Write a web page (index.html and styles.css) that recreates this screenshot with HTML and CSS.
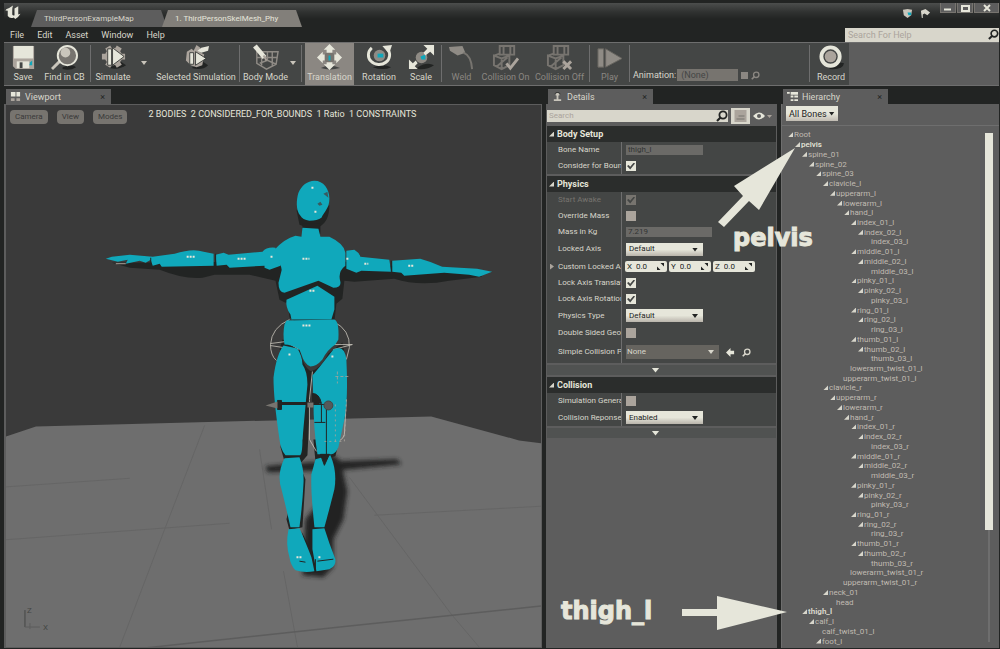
FILE: index.html
```html
<!DOCTYPE html>
<html lang="en">
<head>
<meta charset="utf-8">
<title>ThirdPersonSkelMesh_Phy</title>
<link rel="stylesheet" href="styles.css">
</head>
<body>
<svg class="defs" aria-hidden="true">
  <defs>
    <symbol id="mag" viewBox="0 0 12 12"><circle cx="7" cy="5" r="3.6" fill="none" stroke="currentColor" stroke-width="1.8"/><path d="M4.5 7.5 1 11" stroke="currentColor" stroke-width="2.2"/></symbol>
    <symbol id="gear" viewBox="0 0 28 28"><path d="M10 25Q20 27 27 22L21 18Z" fill="#222423"/><g stroke="#aba49c" stroke-width="6"><path d="M8 3 20 23M20 3 8 23M2 13H26"/></g><circle cx="14" cy="13" r="9" fill="#aba49c"/><path d="M8 5h4v17H8z" fill="#e6e6da" stroke="#222423" stroke-width=".8"/><path d="M13 4 25 13 13 22Z" fill="#e6e6da" stroke="#222423" stroke-width=".8"/></symbol>
    <symbol id="cage" viewBox="0 0 28 28"><path d="M8 2H23V11H8ZM12 2V12M19 2V11M2 12 10 15 18 12V22L10 26 2 22ZM10 15V26M2 12 8 10M4 24 16 14" fill="none" stroke="#77746f" stroke-width="2"/></symbol>
  </defs>
</svg>

<header class="titlebar">
  <svg class="logo" viewBox="0 0 24 24"><path d="M3 7Q8 5 12 2Q11 5 11 8V14Q12 16 14 15V6L19 3V14L22 13Q19 18 15 20L13 18Q8 20 5 16V9Q4 8 2 9Z" fill="#e6e6da"/></svg>
  <nav class="doctabs">
    <button class="doctab">ThirdPersonExampleMap</button>
    <button class="doctab current">1. ThirdPersonSkelMesh_Phy</button>
  </nav>
  <div class="notices">
    <svg viewBox="0 0 12 12"><path d="M1 2 6 1 11 2 10 8 6 11 2 8Z" fill="#c9c5bb"/><path d="M6 5H10V8H7Z" fill="#10a8bb"/></svg>
    <svg viewBox="0 0 12 12"><path d="M1 3 6 1 11 5 8 8 5 6 3 7V11H2Z" fill="#d8d6cb"/></svg>
  </div>
  <div class="winbtns">
    <button aria-label="Minimize"><svg viewBox="0 0 14 8"><path d="M3 5.500H10" stroke="#e6e6da" stroke-width="2"/></svg></button>
    <button aria-label="Restore"><svg viewBox="0 0 14 8"><path d="M4 2H11V7H4Z" fill="none" stroke="#e6e6da" stroke-width="2"/></svg></button>
    <button class="close" aria-label="Close"><svg viewBox="0 0 14 8"><path d="M4 1 10 7M10 1 4 7" stroke="#e6e6da" stroke-width="2"/></svg></button>
  </div>
</header>

<div class="menubar">
  <button>File</button><button>Edit</button><button>Asset</button><button>Window</button><button>Help</button>
  <label class="help"><input type="text" aria-label="Search For Help" placeholder="Search For Help"><svg><use href="#mag"/></svg></label>
</div>

<div class="toolbar">
  <div class="tools">
    <button class="tool w38"><svg viewBox="0 0 28 28"><path d="M3 2H25V26H6L3 23Z" fill="#aba49c"/><path d="M4 2H24V15H4Z" fill="#e6e6da"/><path d="M7 18H20V25H7Z" fill="#e6e6da"/><path d="M10 19H13V25H10Z" fill="#444645"/><path d="M21 19 23 17V22H20Z" fill="#10a8bb"/></svg>Save</button>
    <button class="tool w45"><svg viewBox="0 0 28 28"><path d="M9 18 1 26" stroke="#c9c5bb" stroke-width="3"/><path d="M12 24Q22 20 26 24Q20 28 12 26Z" fill="#222423"/><circle cx="17" cy="12" r="10" fill="#77746f" stroke="#e6e6da" stroke-width="2"/><circle cx="15" cy="9" r="5" fill="#c9c5bb"/></svg>Find in CB</button>
    <i class="sep"></i>
    <button class="tool w38"><svg viewBox="0 0 28 28"><use href="#gear"/></svg>Simulate</button>
    <button class="more w24" aria-label="Simulate options"></button>
    <button class="tool w80"><svg viewBox="0 0 28 28"><path d="M9 25Q20 28 26 22L20 18Z" fill="#222423"/><path d="M4 8 9 5 11 7 14 1 18 4 17 8 22 11 20 22 14 24 8 22 3 17Z" fill="#aba49c"/><path d="M15 7 19 4 27 2 26 7 19 9Z" fill="#e6e6da"/><path d="M7 9H11V21H7ZM13 8 24 15 13 22Z" fill="#e6e6da" stroke="#222423" stroke-width=".8"/></svg>Selected Simulation</button>
    <i class="sep"></i>
    <button class="tool w45"><svg viewBox="0 0 28 28"><path d="M5 8H27L25 21 15 26 5 20ZM8 20 16 17 25 21M16 17V8M10 9V22M21 8V23M5 14H26" fill="none" stroke="#8f8b85" stroke-width="1.500"/><path d="M3 2 13 14" stroke="#e6e6da" stroke-width="5"/><path d="M12 12 15 17" stroke="#aba49c" stroke-width="2"/></svg>Body Mode</button>
    <button class="more w10" aria-label="Body Mode options"></button>
    <i class="sep"></i>
    <button class="tool w49 active"><svg viewBox="0 0 28 28"><path d="M5 25Q14 20 25 25Q14 28 5 25Z" fill="#444645"/><circle cx="14" cy="14" r="6" fill="#77746f"/><path d="M13 12H15V17H13Z" fill="#10a8bb"/><path d="M14 0 20 6H17V9H11V6H8ZM14 27 8 21H11V19H17V21H20ZM1 14 7 8V11H9V17H7V20ZM27 14 21 8V11H19V17H21V20Z" fill="#e6e6da"/></svg>Translation</button>
    <button class="tool w50"><svg viewBox="0 0 28 28"><path d="M7 24Q18 20 26 24Q18 28 7 24Z" fill="#222423"/><circle cx="14" cy="12" r="6" fill="#8f8b85"/><path d="M12 10H18V14H12Z" fill="#10a8bb"/><path d="M6 4A11 10 0 1 0 22 5" fill="none" stroke="#e6e6da" stroke-width="3"/><path d="M17 2 27 1 24 10Z" fill="#e6e6da"/></svg>Rotation</button>
    <button class="tool w34"><svg viewBox="0 0 28 28"><path d="M10 24Q20 18 27 22Q20 27 10 26Z" fill="#222423"/><circle cx="14" cy="14" r="6" fill="#8f8b85"/><path d="M13 13 18 11V16H14Z" fill="#10a8bb"/><path d="M16 1H27V12L23 8 18 12 16 9 20 5ZM1 16 5 20 8 17 10 20 7 23 10 26H1Z" fill="#e6e6da"/></svg>Scale</button>
    <i class="sep"></i>
    <button class="tool w33" disabled><svg viewBox="0 0 28 28"><path d="M1 3 15 2 18 9 10 12 2 7Z" fill="#8f8b85"/><path d="M16 9Q24 12 25 26" fill="none" stroke="#77746f" stroke-width="2"/></svg>Weld</button>
    <button class="tool w55" disabled><svg viewBox="0 0 28 28"><use href="#cage"/><path d="M15 20 19 25 27 15" fill="none" stroke="#aba49c" stroke-width="3"/></svg>Collision On</button>
    <button class="tool w53" disabled><svg viewBox="0 0 28 28"><use href="#cage"/><path d="M18 18 26 26M26 18 18 26" stroke="#aba49c" stroke-width="3"/></svg>Collision Off</button>
    <i class="sep"></i>
    <button class="tool w33" disabled><svg viewBox="0 0 28 28"><path d="M2 5H8V24H2ZM10 5 27 15 10 24Z" fill="#8f8b85" stroke="#66645f"/></svg>Play</button>
    <i class="sep"></i>
    <div class="anim w173"><label for="anim">Animation:</label><select id="anim" disabled><option>(None)</option></select><i class="chip"></i><svg><use href="#mag"/></svg></div>
    <i class="sep"></i>
    <button class="tool w36"><svg viewBox="0 0 28 28"><path d="M12 22Q24 18 27 20Q26 27 12 26Z" fill="#222423"/><circle cx="13" cy="13" r="9.500" fill="#444645" stroke="#e6e6da" stroke-width="4"/><circle cx="13" cy="13" r="6" fill="#aba49c"/></svg>Record</button>
  </div>
</div>

<main class="panels">
  <section class="panel">
    <div class="tab"><svg viewBox="0 0 12 12"><path d="M1 1H6V6H1ZM7 1H11V6H7Z" fill="#e6e6da"/><path d="M1 8H5V11H1ZM7 8H11V11H7Z" fill="#aba49c"/></svg>Viewport<span class="x">×</span></div>
    <div class="viewport">
      <svg class="scene" viewBox="6 105 536 543" preserveAspectRatio="xMidYMid slice">
        <defs>
          <filter id="soft" x="-20%" y="-20%" width="140%" height="140%"><feGaussianBlur stdDeviation="2"/></filter>
        </defs>
        <path d="M0 439 36 427 432 417 520 441 560 446V660H0Z" fill="#6e6e6e"/>
        <g fill="none" stroke="#656565">
          <path d="M205 426 165 530 120 648M350 478 452 615 480 648M284 572 298 648M260 450 272 530M0 488 130 479M0 541 230 524M375 516 542 507"/>
          <path d="M145 649 350 627 542 607" stroke="#5d5d5d" stroke-width="1.500"/>
        </g>
        <g fill="#222423" filter="url(#soft)">
          <path d="M266 467 310 463 398 460 402 465 340 471 268 473Z"/>
          <path d="M328 452 342 462 344 474 348 492 344 520 334 540 334 568 324 578 303 576 306 520 322 500Z"/>
        </g>
        <g fill="#222423">
          <path d="M297 210 300 225Q308 229 320 227Q330 222 330 205L322 216Z"/>
          <path d="M303 224H321V234H303Z"/>
          <path d="M112 263 130 268 160 270Q185 280 203 278L215 275 250 275 276 281 280 300 286 303 288 302 290 318 297 323 335 322 337 304 343 299 345 281 355 282 395 279Q420 287 450 281L483 277 478 273 345 262 270 262Z"/>
          <path d="M283 340 300 347Q303 368 312 372Q322 368 329 354L343 343 345 352 320 378 308 380 280 350Z"/>
          <path d="M304 372H312L308 456 302 463 285 462 281 448 282 440H303Z"/>
          <path d="M314 440H340L336 457 316 462ZM300 465 306 480 303 528 290 531 287 520ZM333 465 337 485 325 530 315 528ZM302 532 316 560V572H313Z"/>
        </g>
        <g fill="none" stroke="#c9c5bb" stroke-width=".8">
          <path d="M290 320Q272 328 271 345Q271 356 277 361M334 322Q351 330 350 348L347 360M271 344 286 342 300 350M271 346 284 348M334 345H353L334 350M313 372 310 400V440L317 452M347 400 345 435Q343 444 330 442"/>
        </g>
        <g fill="#10a8bb">
          <path d="M315 181C324 181 330 189 330 199C330 208 325 212 322 218Q318 221 310 221Q303 220 301 216C296 211 297 199 299 193C302 186 308 181 315 181Z"/>
          <path d="M302 237 303 228 319 229 321 237 330 237Q345 244 346 253V266Q338 272 341 282Q342 288 334 288L319 281 285 293Q279 293 279 283L282 271Q283 266 276 260L275 250Q285 239 296 236Z"/>
          <path d="M263 252Q267 247 276 248L281 266 270 270 265 268V266L230 268 227 265 217 266 216 255 224 253 229 255Z"/>
          <path d="M153 257 175 254Q193 248 204 252L214 254V266L162 267 160 264 153 266 151 260 146 263 140 261 126 264 128 260 118 262 106 259 112 257 130 255Z"/>
          <path d="M347 251 355 250Q360 253 361 257L390 260 392 272 362 271 357 273 347 269Z"/>
          <path d="M393 261 421 259Q432 262 443 267L478 269 493 272 480 277 470 275 445 273 405 276 402 273 393 272Z"/>
          <path d="M287 300 318 286 335 297V310L332 320H292L291 315Q286 308 287 300Z"/>
          <path d="M287 321 335 320Q340 322 339 340L336 345Q328 350 323 360Q317 367 311 367Q305 365 302 355L300 350Q292 345 285 345Q283 335 285 325Z"/>
          <path d="M284 346 298 349Q303 357 303 365Q308 372 308 385L303 440Q303 456 300 456L286 456Q281 450 280 440Q274 400 274 378Q277 355 284 346Z"/>
          <path d="M334 350Q345 344 347 360Q349 400 345 420L339 448Q336 455 332 455H318Q314 430 314 400L313 376Q320 368 326 360Z"/>
          <path d="M285 459 300 458Q305 470 304 485Q303 505 300 528H291Q287 510 282 490Q277 475 285 459Z"/>
          <path d="M316 460 331 456Q338 472 335 490Q330 510 325 528H315Q311 490 312 475Z"/>
          <path d="M289 530 300 529Q307 545 312 558L315 572Q305 574 296 571Q291 566 290 558Q286 545 289 530Z"/>
          <path d="M313 530 325 529Q330 545 336 560Q337 567 330 570L317 572 313 550Z"/>
        </g>
        <g stroke="#222423" fill="#222423">
          <path d="M278 405H330M327 405V460M322 405V423M315 423H326M300 562 306 563M318 562 334 560M316 560V572M216 254V266M151 258V265M392 261V272" fill="none"/>
          <path d="M282 404H320" fill="none" stroke-width="3"/>
          <path d="M278 401H282V410H278ZM313 394Q320 394 322 404L313 402ZM321 455H330L325 466Z"/>
          <circle cx="329" cy="406" r="4.500" fill="#55595a" stroke="#444645"/>
          <path d="M266 406 278 402V409ZM308 403H314V408H308Z" fill="#77746f" stroke="none"/>
          <path d="M318 204 321 202 323 205 320 206ZM324 194 328 192 329 198Z" fill="#3a5a5f" stroke="none"/>
        </g>
        <path d="M116 264H126" stroke="#aba49c"/>
        <g fill="none" stroke="#aba49c" stroke-width=".8">
          <path d="M336 377H350M338 372V384" stroke-dasharray="3 2"/>
          <path d="M336 405V442M325 442H345L347 400" stroke-dasharray="2 3"/>
        </g>
        <g stroke="#e6e6da" stroke-width="2" stroke-dasharray="2 1">
          <path d="M303 259H310M187 257H195M238 259H246M271 257H274M347 259H349M365 264H369M409 266H414M312 188H315M315 212H317M310 291H315M303 326H311M289 355H292M332 357H335M297 558H302M319 558H321"/>
        </g>
        <g fill="none" stroke="#444645"><path d="M25 611V628"/><path d="M25 628H40M30 624V630" stroke="#5d5d5d"/></g>
        <g fill="#444645" class="axis"><text x="27" y="614">Z</text><text x="43" y="631">X</text></g>
      </svg>
      <div class="vbar">
        <button>Camera</button><button>View</button><button>Modes</button>
        <span class="stats">2 BODIES&nbsp; 2 CONSIDERED_FOR_BOUNDS&nbsp; 1 Ratio&nbsp; 1 CONSTRAINTS</span>
      </div>
    </div>
  </section>

  <section class="panel">
    <div class="tab"><svg viewBox="0 0 12 12"><path d="M4 2H8V5H7V9H10V11H2V9H5V5H4Z" fill="#c9c5bb"/><path d="M3 3A4 4 0 0 1 9 3" fill="none" stroke="#222423"/></svg>Details<span class="x">×</span></div>
    <div class="body details">
      <div class="searchrow">
        <label class="find"><input type="text" aria-label="Search details" placeholder="Search"><svg><use href="#mag"/></svg></label>
        <button class="grid" aria-label="Property matrix"><svg viewBox="0 0 12 12"><path d="M0 0H12V12H0Z" fill="#aba49c"/><path d="M2 9H10M4 6H10" stroke="#77746f"/></svg></button>
        <button class="eye" aria-label="View options"><svg viewBox="0 0 20 10"><path d="M0 5Q6-2 12 5Q6 12 0 5Z" fill="#e6e6da"/><circle cx="6" cy="5" r="2" fill="#5d5d5d"/><path d="M14 4H19L16.500 7Z" fill="#aba49c"/></svg></button>
      </div>

      <h2>Body Setup</h2>
      <div class="row"><label for="bone">Bone Name</label><div><input class="dim" id="bone" type="text" value="thigh_l" readonly></div></div>
      <div class="row"><label for="cons">Consider for Bounds</label><div><input id="cons" type="checkbox" checked></div></div>

      <h2 class="next">Physics</h2>
      <div class="row off"><label for="awake">Start Awake</label><div><input id="awake" type="checkbox" checked disabled></div></div>
      <div class="row"><label for="over">Override Mass</label><div><input id="over" type="checkbox"></div></div>
      <div class="row"><label for="mass">Mass in Kg</label><div><input class="dim wide" id="mass" type="text" value="7.219" readonly></div></div>
      <div class="row h18"><label for="axis">Locked Axis</label><div><span class="combo"><select id="axis"><option>Default</option></select></span></div></div>
      <div class="row h17"><label for="cx" class="closed">Custom Locked Axis</label><div class="vec">
        <label>X<input id="cx" type="text" value="0.0"><svg viewBox="0 0 8 8"><path d="M4 0H8V4ZM0 4V8H4Z" fill="#222423"/></svg></label>
        <label>Y<input type="text" value="0.0"><svg viewBox="0 0 8 8"><path d="M4 0H8V4ZM0 4V8H4Z" fill="#222423"/></svg></label>
        <label>Z<input type="text" value="0.0"><svg viewBox="0 0 8 8"><path d="M4 0H8V4ZM0 4V8H4Z" fill="#222423"/></svg></label></div></div>
      <div class="row"><label for="lt">Lock Axis Translation</label><div><input id="lt" type="checkbox" checked></div></div>
      <div class="row"><label for="lr">Lock Axis Rotation</label><div><input id="lr" type="checkbox" checked></div></div>
      <div class="row h17"><label for="pt">Physics Type</label><div><span class="combo"><select id="pt"><option>Default</option></select></span></div></div>
      <div class="row h17"><label for="ds">Double Sided Geometry</label><div><input id="ds" type="checkbox"></div></div>
      <div class="row h22"><label for="sc">Simple Collision Physical Material</label><div><span class="combo dark"><select id="sc"><option>None</option></select></span>
        <button class="mini" aria-label="Use selected"><svg viewBox="0 0 10 10"><path d="M0 5 5 0V3H9V7H5V10Z" fill="#e6e6da"/></svg></button>
        <button class="mini" aria-label="Browse"><svg><use href="#mag"/></svg></button></div></div>
      <button class="expand" aria-label="Show advanced physics"></button>

      <h2>Collision</h2>
      <div class="row"><label for="sg">Simulation Generates Hit Events</label><div><input id="sg" type="checkbox"></div></div>
      <div class="row h17"><label for="cr">Collision Reponse</label><div><span class="combo"><select id="cr"><option>Enabled</option></select></span></div></div>
      <button class="expand" aria-label="Show advanced collision"></button>
    </div>
  </section>

  <section class="panel">
    <div class="tab"><svg viewBox="0 0 12 12"><path d="M0 1H3V3H0ZM4 1H12V4H4ZM4 5H7V7H4ZM8 5H12V7H8ZM4 9H7V11H4ZM8 9H12V11H8Z" fill="#e6e6da"/></svg>Hierarchy<span class="x">×</span></div>
    <div class="body hier">
      <div class="filter"><button class="bones">All Bones</button></div>
      <div class="treebox">
        <ul class="tree">
          <li class="d0 open">Root</li><li class="d1 open hot">pelvis</li><li class="d2 open">spine_01</li><li class="d3 open">spine_02</li><li class="d4 open">spine_03</li>
          <li class="d5 open">clavicle_l</li><li class="d6 open">upperarm_l</li><li class="d7 open">lowerarm_l</li><li class="d8 open">hand_l</li>
          <li class="d9 open">index_01_l</li><li class="d10 open">index_02_l</li><li class="d11">index_03_l</li>
          <li class="d9 open">middle_01_l</li><li class="d10 open">middle_02_l</li><li class="d11">middle_03_l</li>
          <li class="d9 open">pinky_01_l</li><li class="d10 open">pinky_02_l</li><li class="d11">pinky_03_l</li>
          <li class="d9 open">ring_01_l</li><li class="d10 open">ring_02_l</li><li class="d11">ring_03_l</li>
          <li class="d9 open">thumb_01_l</li><li class="d10 open">thumb_02_l</li><li class="d11">thumb_03_l</li>
          <li class="d8">lowerarm_twist_01_l</li><li class="d7">upperarm_twist_01_l</li>
          <li class="d5 open">clavicle_r</li><li class="d6 open">upperarm_r</li><li class="d7 open">lowerarm_r</li><li class="d8 open">hand_r</li>
          <li class="d9 open">index_01_r</li><li class="d10 open">index_02_r</li><li class="d11">index_03_r</li>
          <li class="d9 open">middle_01_r</li><li class="d10 open">middle_02_r</li><li class="d11">middle_03_r</li>
          <li class="d9 open">pinky_01_r</li><li class="d10 open">pinky_02_r</li><li class="d11">pinky_03_r</li>
          <li class="d9 open">ring_01_r</li><li class="d10 open">ring_02_r</li><li class="d11">ring_03_r</li>
          <li class="d9 open">thumb_01_r</li><li class="d10 open">thumb_02_r</li><li class="d11">thumb_03_r</li>
          <li class="d8">lowerarm_twist_01_r</li><li class="d7">upperarm_twist_01_r</li>
          <li class="d5 open">neck_01</li><li class="d6">head</li>
          <li class="d2 open bold">thigh_l</li><li class="d3 open">calf_l</li><li class="d4">calf_twist_01_l</li><li class="d4 open">foot_l</li>
        </ul>
        <div class="scroll"><i></i></div>
      </div>
    </div>
  </section>
</main>

<svg class="arrow up" viewBox="0 0 78 80"><path d="M77 0 41 62 31 53 6 79 0 74 25 48 16 38Z"/></svg>
<svg class="arrow right" viewBox="0 0 106 36"><path d="M105 17 35 35V21H0V14H35V1Z"/></svg>
<span class="note n1">pelvis</span>
<span class="note n2">thigh_l</span>
</body>
</html>
```
FILE: styles.css
```css
* { box-sizing: border-box; }
html, body { height: 100%; }
body {
  margin: 0;
  padding: 3px 1px 1px 4px;
  display: flex;
  flex-direction: column;
  position: relative;
  overflow: hidden;
  background: #222423;
  color: #d8d6cb;
  font: 9px/12px Roboto, "Liberation Sans", sans-serif;
}
button, input, select {
  font: inherit;
  color: inherit;
  background: none;
  border: 0;
  padding: 0;
  margin: 0;
  border-radius: 0;
  appearance: none;
}
svg { display: block; flex: none; }
.defs { position: absolute; width: 0; height: 0; }

.titlebar { display: flex; height: 24px; background: linear-gradient(#4c4e4d, #303231 9px, #222423 16px); }
.logo { width: 18px; height: 20px; }
.doctabs { display: flex; align-items: flex-end; flex: 1; padding-left: 9px; font-size: 8px; }
.doctab {
  width: 136px;
  height: 17px;
  padding-left: 13px;
  text-align: left;
  background: #5d5d5d;
  clip-path: polygon(6px 0, calc(100% - 6px) 0, 100% 100%, 0 100%);
}
.doctab.current { width: 140px; margin-left: -5px; background: #827f7a; color: #e6e6da; }
.notices { display: flex; gap: 7px; padding: 5px 9px 0 0; }
.notices svg { width: 11px; height: 11px; }
.winbtns { display: flex; gap: 1px; align-items: flex-start; }
.winbtns button { width: 16px; height: 10px; background: #5d5d5d; border: 1px solid #77746f; border-top: 0; }
.winbtns .close { width: 25px; }
.winbtns svg { width: 14px; height: 8px; margin: auto; }

.menubar { display: flex; height: 15px; align-items: center; gap: 13px; padding-left: 6px; }
.help { display: flex; align-items: center; width: 154px; height: 14px; margin-left: auto; background: #d8d6cb; }
.help input { flex: 1; min-width: 0; padding-left: 3px; }
.help svg { width: 11px; height: 11px; color: #222423; }
::placeholder { color: #aba49c; opacity: 1; }

.toolbar { height: 44px; background: #5d5d5d; border: 1px solid #6e6e6e; border-width: 1px 0 1px 0; }
.tools { display: inline-flex; height: 42px; background: #444645; }
.tool { display: flex; flex-direction: column; align-items: center; padding-top: 1px; height: 42px; white-space: nowrap; flex: none; }
.tool svg { width: 27px; height: 27px; }
.tool:disabled { color: #8b8782; }
.tool.active { background: #8b8782; color: #d8d6cb; }
.sep { flex: none; width: 1px; height: 37px; margin: 2px 3px; background: #6e6e6e; }
.more { display: grid; place-items: center; height: 40px; }
.more::before { content: ""; width: 6px; height: 4px; background: #c9c5bb; clip-path: polygon(0 0, 100% 0, 50% 100%); }
.w10 { width: 10px; } .w24 { width: 24px; } .w33 { width: 33px; } .w34 { width: 34px; } .w36 { width: 36px; }
.w38 { width: 38px; } .w45 { width: 45px; } .w49 { width: 49px; } .w50 { width: 50px; } .w53 { width: 53px; }
.w55 { width: 55px; } .w80 { width: 80px; } .w173 { width: 173px; }
.anim { display: flex; align-items: center; gap: 3px; height: 12px; margin-top: 26px; }
.anim select { width: 61px; height: 12px; padding-left: 4px; background: #77746f; color: #444645; opacity: 1; }
.anim label { margin-right: -2px; }
.anim .chip { width: 7px; height: 7px; background: #8b8782; }
.anim svg { width: 9px; height: 9px; color: #8b8782; }

.panels {
  flex: 1;
  min-height: 0;
  display: grid;
  grid-template-columns: minmax(0, 1fr) 231px 218px;
  gap: 4px;
  padding-top: 3px;
}
.panel { display: flex; flex-direction: column; min-width: 0; min-height: 0; }
.tab { display: flex; align-items: center; gap: 4px; width: 105px; height: 15px; margin-left: 2px; padding: 0 6px 0 4px; background: #5d5d5d; flex: none; }
.tab svg { width: 11px; height: 11px; }
.tab .x { margin-left: auto; color: #222423; }
.body { flex: 1; min-height: 0; background: #5d5d5d; font-size: 8px; }

.viewport { flex: 1; min-height: 0; position: relative; border: 1px solid #5d5d5d; border-left-width: 2px; background: #3a3a3a; }
.scene { position: absolute; inset: 0; width: 100%; height: 100%; }
.axis { font: 8px Roboto, sans-serif; }
.vbar { position: relative; display: flex; align-items: center; gap: 9px; padding: 3px 4px; }
.vbar button { height: 14px; padding: 0 5px; border-radius: 4px; background: #77746f; color: #3a3a3a; font-size: 8px; }
.vbar .stats { margin: 0 0 5px 12px; color: #e6e6da; }

.details { padding: 0 1px; }
.searchrow { display: flex; align-items: center; gap: 3px; height: 22px; padding-top: 2px; }
.find { display: flex; align-items: center; width: 181px; height: 12px; background: #d8d6cb; }
.find input { flex: 1; min-width: 0; padding-left: 2px; }
.find svg { width: 12px; height: 12px; color: #222423; }
.grid { width: 19px; height: 16px; background: #d8d6cb; display: grid; place-items: center; }
.grid svg { width: 13px; height: 12px; }
.eye svg { width: 20px; height: 10px; }
.details h2 {
  display: flex;
  align-items: center;
  gap: 3px;
  margin: 0;
  height: 16px;
  padding-left: 2px;
  background: #2b2d2c;
  font-size: 9px;
  font-weight: 700;
  color: #e6e6da;
}
.details h2.next { margin-top: 2px; }
.details h2::before, .tree .open::before { content: ""; width: 5px; height: 5px; background: #d8d6cb; clip-path: polygon(100% 0, 100% 100%, 0 100%); }
.row { display: grid; grid-template-columns: 75px minmax(0, 1fr); height: 16px; background: #444645; }
.row > label { display: flex; align-items: center; overflow: hidden; white-space: nowrap; padding-left: 11px; border-right: 1px solid #6e6e6e; }
.row > label.closed { padding-left: 3px; gap: 4px; }
.closed::before { content: ""; flex: none; width: 4px; height: 6px; background: #aba49c; clip-path: polygon(0 0, 100% 50%, 0 100%); }
.row > div { display: flex; align-items: center; gap: 7px; padding-left: 4px; }
.row.off { color: #77746f; }
.h17 { height: 17px; } .h18 { height: 18px; } .h22 { height: 22px; }
.dim { width: 77px; height: 10px; padding-left: 2px; background: #6b6a67; color: #333534; }
.dim.wide { width: 86px; }
input[type="checkbox"] { display: grid; place-items: center; width: 10px; height: 10px; background: #aba49c; }
input[type="checkbox"]:checked { background: #e6e6da; }
input[type="checkbox"]:disabled { background: #77746f; }
input[type="checkbox"]:checked::before { content: ""; width: 8px; height: 7px; background: #444645; clip-path: polygon(0 50%, 20% 35%, 40% 60%, 85% 0, 100% 15%, 40% 100%); }
.combo { position: relative; display: flex; width: 77px; height: 13px; background: linear-gradient(#e6e6da 50%, #b9b4ab); color: #222423; }
.combo select { width: 100%; padding-left: 3px; }
.combo::after { content: ""; position: absolute; right: 5px; top: 5px; width: 6px; height: 4px; background: currentColor; clip-path: polygon(0 0, 100% 0, 50% 100%); pointer-events: none; }
.combo.dark { width: 93px; height: 14px; background: #66645f; color: #d8d6cb; }
.combo.dark select { padding-left: 1px; }
.row .vec { gap: 2px; padding-left: 3px; }
.vec label { display: flex; align-items: center; gap: 4px; width: 42px; height: 11px; padding: 0 3px 0 2px; border-radius: 2px; background: #e6e6da; color: #222423; }
.vec input { flex: 1; width: 0; }
.vec svg { width: 7px; height: 7px; }
.mini svg { width: 9px; height: 9px; color: #d8d6cb; }
.expand { display: grid; place-items: center; width: 100%; height: 10px; margin: 2px 0; background: #505251; }
.expand::before { content: ""; width: 8px; height: 5px; margin-right: 12px; background: #e6e6da; clip-path: polygon(0 0, 100% 0, 50% 100%); }

.hier { display: flex; flex-direction: column; border-left: 1px solid #6e6e6e; }
.filter { height: 22px; padding: 2px 4px; border-bottom: 1px solid #6e6e6e; }
.bones { display: flex; align-items: center; gap: 2px; height: 15px; padding: 0 3px; background: linear-gradient(#e6e6da 50%, #c0bbb2); color: #222423; font-size: 9px; }
.bones::after { content: ""; width: 6px; height: 4px; background: #222423; clip-path: polygon(0 0, 100% 0, 50% 100%); }
.treebox { flex: 1; min-height: 0; display: flex; padding: 4px 6px 2px 0; }
.tree { flex: 1; list-style: none; margin: 0; padding: 0 0 0 12px; display: flex; flex-direction: column; color: #c0bbb2; }
.tree li { flex: 1 1 0; min-height: 0; display: flex; align-items: center; gap: 1px; line-height: 9px; white-space: nowrap; }
.tree .open::before { margin-left: -6px; }
.tree .hot { color: #e6e6da; font-weight: 500; }
.tree .bold { color: #d8d6cb; font-weight: 700; }
.d1 { padding-left: 7px; } .d2 { padding-left: 14px; } .d3 { padding-left: 21px; } .d4 { padding-left: 28px; }
.d5 { padding-left: 35px; } .d6 { padding-left: 42px; } .d7 { padding-left: 49px; } .d8 { padding-left: 56px; }
.d9 { padding-left: 63px; } .d10 { padding-left: 70px; } .d11 { padding-left: 77px; }
.scroll { width: 8px; margin: 3px 0 4px; background: linear-gradient(#6e6e6e, #6e6e6e) center / 2px 100% no-repeat; }
.scroll i { display: block; height: 78%; background: #e6e6da; }

.arrow { position: absolute; fill: #e6e6da; pointer-events: none; }
.arrow.up { left: 718px; top: 148px; width: 78px; height: 80px; }
.arrow.right { left: 682px; top: 595px; width: 106px; height: 36px; }
.note { position: absolute; color: #e6e6da; font: bold 24px/28px "DejaVu Sans", sans-serif; -webkit-text-stroke: 1px #e6e6da; }
.n1 { left: 733px; top: 224px; }
.n2 { left: 561px; top: 597px; }
```
